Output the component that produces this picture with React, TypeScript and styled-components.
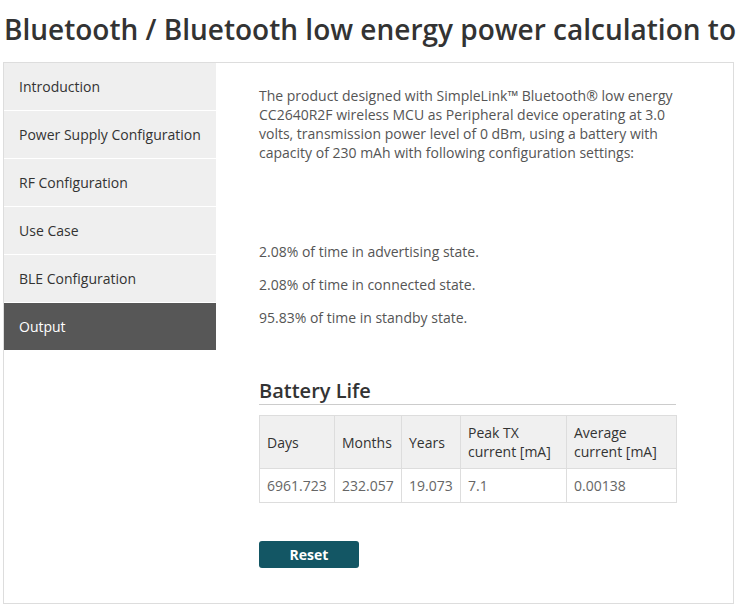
import styled, { createGlobalStyle } from 'styled-components';

const GlobalStyle = createGlobalStyle`
  html, body {
    margin: 0;
    padding: 0;
    background: #fff;
    overflow: hidden;
  }
  body {
    font-family: 'Open Sans', 'Liberation Sans', sans-serif;
    font-size: 14px;
    color: #555;
  }
`;

const Page = styled.div`
  padding: 12px 2px 0 3px;
  width: 731px;
`;

const Title = styled.h1`
  margin: 0 0 16px 1px;
  font-size: 28px;
  line-height: 34px;
  font-weight: 600;
  color: #333;
  white-space: nowrap;
`;

const Panel = styled.div`
  display: flex;
  border: 1px solid #ddd;
  height: 542px;
  box-sizing: border-box;
`;

const Nav = styled.ul`
  list-style: none;
  margin: 0;
  padding: 0;
  width: 212px;
  flex: none;
`;

const NavItem = styled.li<{ $active?: boolean }>`
  display: flex;
  align-items: center;
  height: 47px;
  padding-left: 15px;
  border-bottom: 1px solid #fff;
  background: ${(p) => (p.$active ? '#575757' : '#efefef')};
  color: ${(p) => (p.$active ? '#fff' : '#333')};
  font-size: 14px;
`;

const Content = styled.div`
  padding: 23px 0 0 43px;
  width: 417px;
`;

const Text = styled.p<{ $gap?: number }>`
  margin: 0 0 ${(p) => p.$gap ?? 14}px;
  line-height: 19px;
`;

const Heading = styled.h2`
  margin: 0 0 10px;
  font-size: 20px;
  line-height: 24px;
  font-weight: 600;
  color: #333;
  padding-bottom: 1px;
  border-bottom: 1px solid #ccc;
`;

const Table = styled.table`
  width: 417px;
  border-collapse: collapse;
  table-layout: fixed;
`;

const Th = styled.th`
  background: #f0f0f0;
  border: 1px solid #ddd;
  padding: 7px 7px;
  text-align: left;
  font-weight: 400;
  color: #333;
  line-height: 19px;
`;

const Td = styled.td`
  border: 1px solid #ddd;
  padding: 7px 7px;
  line-height: 19px;
  color: #666;
`;

const ResetButton = styled.button`
  display: block;
  margin-top: 38px;
  width: 100px;
  height: 27px;
  border: none;
  border-radius: 3px;
  background: #135664;
  color: #fff;
  font-family: 'Open Sans', 'Liberation Sans', sans-serif;
  font-size: 14px;
  font-weight: 700;
  cursor: pointer;
`;

const navItems = [
  'Introduction',
  'Power Supply Configuration',
  'RF Configuration',
  'Use Case',
  'BLE Configuration',
  'Output',
];

const columns = [
  { label: 'Days', width: 75 },
  { label: 'Months', width: 67 },
  { label: 'Years', width: 59 },
  { label: 'Peak TX current [mA]', width: 106 },
  { label: 'Average current [mA]', width: 110 },
];

const values = ['6961.723', '232.057', '19.073', '7.1', '0.00138'];

export default function App() {
  return (
    <>
      <GlobalStyle />
      <Page>
        <Title>Bluetooth / Bluetooth low energy power calculation tool</Title>
        <Panel>
          <Nav>
            {navItems.map((item) => (
              <NavItem key={item} $active={item === 'Output'}>
                {item}
              </NavItem>
            ))}
          </Nav>
          <Content>
            <Text $gap={80}>
              The product designed with SimpleLink™ Bluetooth® low energy CC2640R2F wireless MCU as
              Peripheral device operating at 3.0 volts, transmission power level of 0 dBm, using a
              battery with capacity of 230 mAh with following configuration settings:
            </Text>
            <Text>2.08% of time in advertising state.</Text>
            <Text>2.08% of time in connected state.</Text>
            <Text $gap={52}>95.83% of time in standby state.</Text>
            <Heading>Battery Life</Heading>
            <Table>
              <colgroup>
                {columns.map((c) => (
                  <col key={c.label} style={{ width: c.width }} />
                ))}
              </colgroup>
              <thead>
                <tr>
                  {columns.map((c) => (
                    <Th key={c.label}>{c.label}</Th>
                  ))}
                </tr>
              </thead>
              <tbody>
                <tr>
                  {values.map((v, i) => (
                    <Td key={i}>{v}</Td>
                  ))}
                </tr>
              </tbody>
            </Table>
            <ResetButton>Reset</ResetButton>
          </Content>
        </Panel>
      </Page>
    </>
  );
}
